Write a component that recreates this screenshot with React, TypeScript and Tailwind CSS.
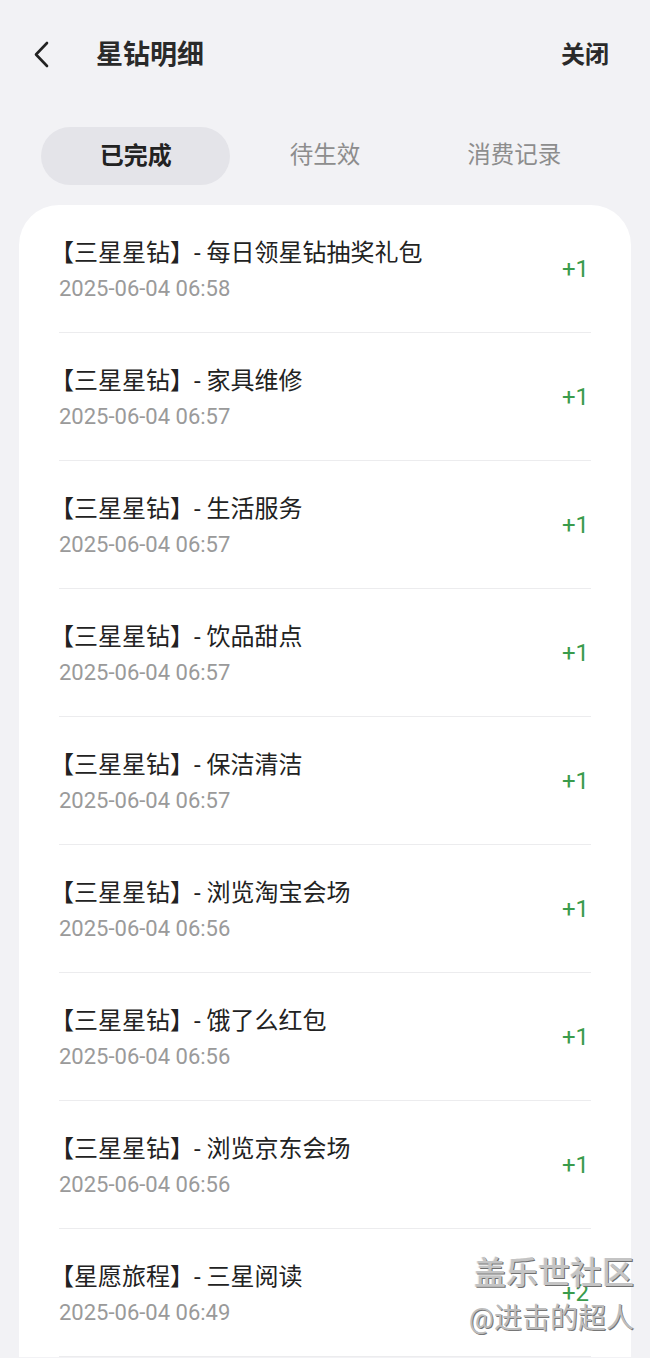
import React from "react";

const records = [
  { title: "【三星星钻】- 每日领星钻抽奖礼包", time: "2025-06-04 06:58", delta: "+1" },
  { title: "【三星星钻】- 家具维修", time: "2025-06-04 06:57", delta: "+1" },
  { title: "【三星星钻】- 生活服务", time: "2025-06-04 06:57", delta: "+1" },
  { title: "【三星星钻】- 饮品甜点", time: "2025-06-04 06:57", delta: "+1" },
  { title: "【三星星钻】- 保洁清洁", time: "2025-06-04 06:57", delta: "+1" },
  { title: "【三星星钻】- 浏览淘宝会场", time: "2025-06-04 06:56", delta: "+1" },
  { title: "【三星星钻】- 饿了么红包", time: "2025-06-04 06:56", delta: "+1" },
  { title: "【三星星钻】- 浏览京东会场", time: "2025-06-04 06:56", delta: "+1" },
  { title: "【星愿旅程】- 三星阅读", time: "2025-06-04 06:49", delta: "+2" },
];

const tabs = ["已完成", "待生效", "消费记录"];

export default function App() {
  return (
    <div className="relative h-[1358px] w-[650px] overflow-hidden bg-[#f2f2f5] font-['Roboto','Noto_Sans_CJK_SC',sans-serif]">
      {/* header */}
      <div className="flex h-[110px] items-center pl-[30px] pr-[41px]">
        <svg width="24" height="32" viewBox="0 0 24 32" className="mr-[42px]">
          <path d="M17 4 L6 15.5 L17 27" fill="none" stroke="#222" strokeWidth="2.6" strokeLinecap="round" strokeLinejoin="round" />
        </svg>
        <h1 className="flex-1 text-[27px] font-bold text-[#2a2a2a]">星钻明细</h1>
        <button className="text-[24px] font-bold text-[#2a2a2a]">关闭</button>
      </div>

      {/* tabs */}
      <div className="mt-[17px] grid grid-cols-3 px-[41px]">
        {tabs.map((t, i) => (
          <div
            key={t}
            className={
              i === 0
                ? "flex h-[58px] items-center justify-center rounded-full bg-[#e4e4e9] text-[24px] font-bold text-[#222]"
                : "flex h-[58px] items-center justify-center text-[23.5px] text-[#8d8d8d]"
            }
          >
            {t}
          </div>
        ))}
      </div>

      {/* list card */}
      <div className="mx-[19px] mt-[20px] rounded-t-[40px] bg-white px-[40px]">
        {records.map((r, i) => (
          <div key={i} className="flex h-[128px] items-center border-b border-[#ececee]">
            <div className="flex-1 pt-[4px]">
              <p className="-ml-[9px] text-[24px] leading-[30px] text-[#222]">{r.title}</p>
              <p className="mt-[7px] text-[22px] leading-[28px] text-[#9a9a9a]">{r.time}</p>
            </div>
            <span className="pr-[2px] text-[24px] text-[#3a9b4c]">{r.delta}</span>
          </div>
        ))}
      </div>

      {/* watermark */}
      <div className="absolute right-[16px] top-[1257px] flex flex-col items-end leading-none">
        <span className="text-[32px] font-medium text-[#c4c4c4] [text-shadow:1px_1px_0_#6f6f6f,-1px_0_0_#eee]">盖乐世社区</span>
        <span className="mt-[16px] text-[28px] text-[#bdbdbd] [text-shadow:1px_1px_0_#777]">@进击的超人</span>
      </div>
    </div>
  );
}
